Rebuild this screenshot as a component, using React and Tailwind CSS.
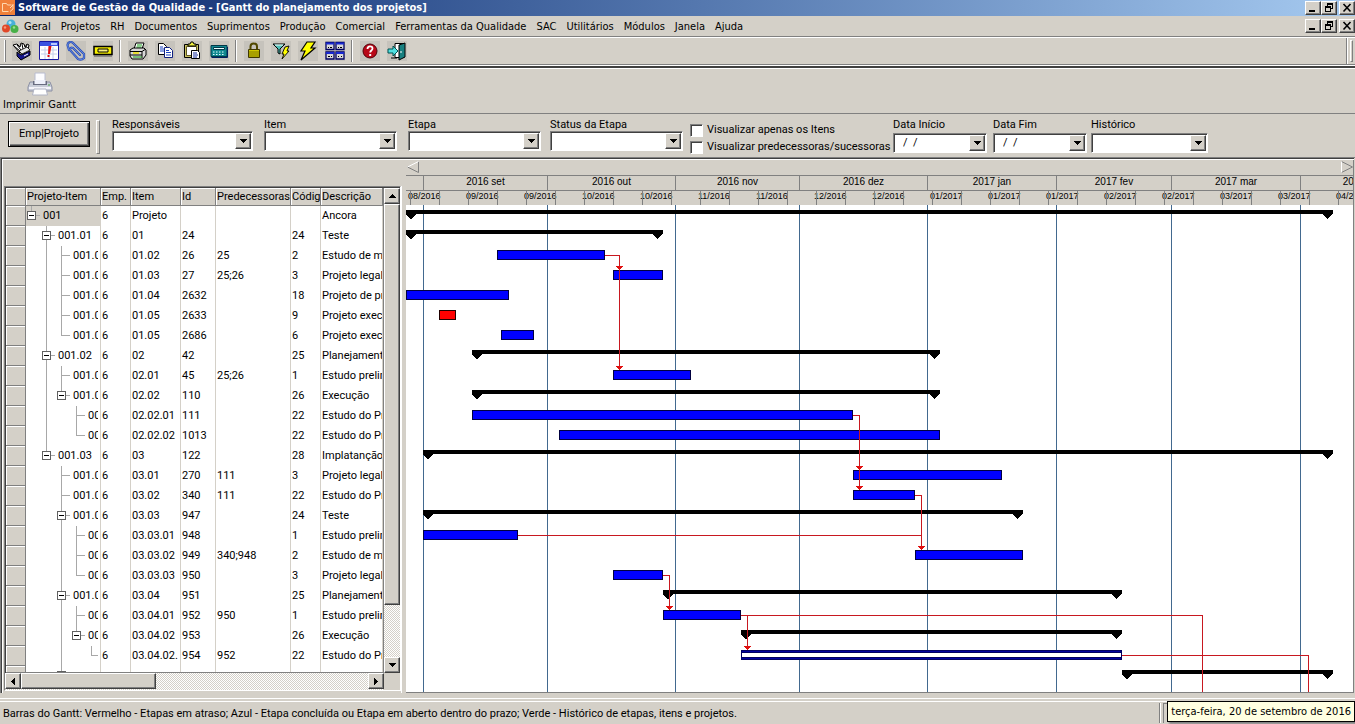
import React from "react";

const RAISED =
  "border border-t-white border-l-white border-r-[#404040] border-b-[#404040] bg-[#d4d0c8] shadow-[inset_-1px_-1px_#808080]";
const SUNKEN =
  "border border-t-[#808080] border-l-[#808080] border-r-white border-b-white bg-white shadow-[inset_1px_1px_#404040]";
const TRACK =
  "bg-[repeating-conic-gradient(#ffffff_0_25%,#d4d0c8_0_50%)] bg-[length:2px_2px]";
const UI = "font-['DejaVu_Sans_Condensed','DejaVu_Sans',sans-serif]";

const menus = [
  "Geral", "Projetos", "RH", "Documentos", "Suprimentos", "Produção", "Comercial",
  "Ferramentas da Qualidade", "SAC", "Utilitários", "Módulos", "Janela", "Ajuda",
];

/* ---------- window buttons ---------- */

function WindowButtons() {
  return (
    <div className="flex">
      <button aria-label="Minimizar" className={`h-[14px] w-4 ${RAISED}`}>
        <svg width="14" height="12" shapeRendering="crispEdges"><path d="M3 8h6v2H3z" /></svg>
      </button>
      <button aria-label="Restaurar" className={`h-[14px] w-4 ${RAISED}`}>
        <svg width="14" height="12" shapeRendering="crispEdges">
          <path d="M5 1h6v2H5zM5 3h1v1H5zM10 3h1v4h-1zM9 6h1v1H9zM3 4h6v2H3zM3 6h1v4H3zM8 6h1v4H8zM3 9h6v1H3z" />
        </svg>
      </button>
      <button aria-label="Fechar" className={`ml-0.5 h-[14px] w-4 ${RAISED}`}>
        <svg width="14" height="12"><path d="M3.500 2l7 7.500M10.500 2l-7 7.500" stroke="#000" strokeWidth="1.600" /></svg>
      </button>
    </div>
  );
}

/* ---------- toolbar icons (20 x 20) ---------- */

const icons = {
  agenda: (
    <>
      <path d="M1 4l4-1 3 3 1-4 3 1 1 3 2-3 2 1-1 4-8 4z" fill="#fff" stroke="#000" />
      <path d="M2 5l6 5M5 4l4 5M10 3l1 5M15 4l-2 4" stroke="#000" />
      <path d="M5 11l4 3 9-4v4l-9 5-4-4z" fill="#16168c" stroke="#000" />
      <path d="M7 10l8-4 3 3-8 4z" fill="#e8e8e8" stroke="#000" strokeWidth=".8" />
      <path d="M12 15l4-2" stroke="#fff" />
    </>
  ),
  calendar: (
    <>
      <path d="M.5.5h19v18H.5z" fill="#fff" stroke="#1818a0" />
      <path d="M1 1h18v4H1z" fill="#3a52e0" />
      <path d="M12 2h6v2h-6z" fill="#b8c8ff" />
      <path d="M2 9h16M2 13h16M6 6v12M10 6v12M14 6v12" stroke="#c4cce8" />
      <path d="M9.500 5h3l-1.500 8H9z" fill="#e01010" />
      <path d="M8.500 14h2v2h-2z" fill="#e01010" />
    </>
  ),
  clip: (
    <g fill="none" strokeLinejoin="round" strokeLinecap="round">
      <path d="M3 9L1.500 4C2 1 5 0 7 2l11 11v4c-2 2-4 2-6 1L4 9c0-2 1-3 3-2l7 7" stroke="#2c50b4" strokeWidth="2.200" />
      <path d="M3 9L1.500 4C2 1 5 0 7 2l11 11v4c-2 2-4 2-6 1L4 9c0-2 1-3 3-2l7 7" stroke="#6c90e8" strokeWidth=".8" />
    </g>
  ),
  tag: (
    <>
      <path d="M1 5.500h18v8H1z" fill="#f8f000" stroke="#000" strokeWidth="1.500" />
      <path d="M5 8h10v3H5z" fill="#f8f080" stroke="#000" />
      <path d="M1 15h18" stroke="#505050" />
    </>
  ),
  print: (
    <>
      <path d="M6 8l2-6h8l-2 6z" fill="#fff" stroke="#000" />
      <path d="M9 4h5M8.500 6h5" stroke="#18a018" />
      <path d="M2 9l3-2h11l2 2v5l-3 4H4l-2-3z" fill="#d8d8d8" stroke="#000" />
      <path d="M2 10.500h12l3-2M2 14h12M14 10.500V17" stroke="#000" fill="none" />
      <path d="M5 12h6" stroke="#f0e000" strokeWidth="1.500" />
      <path d="M5 16h9" stroke="#18a018" />
    </>
  ),
  copy: (
    <>
      <path d="M3.500 2.500h5l3 3v8h-8z" fill="#fff" stroke="#000" />
      <path d="M5 6h3M5 8h4M5 10h4" stroke="#1840c0" />
      <path d="M9.500 6.500h5l3 3v7h-8z" fill="#fff" stroke="#102080" />
      <path d="M11 9.500h3M11 11.500h5M11 14h5" stroke="#1840c0" />
    </>
  ),
  paste: (
    <>
      <path d="M2.500 3.500h14v13h-14z" fill="#c8c060" stroke="#000" />
      <path d="M4.500 5.500h10v9h-10z" fill="#fff" stroke="#605820" />
      <path d="M6 5V3h2l1-2h2l1 2h2v2z" fill="#f0f040" stroke="#000" />
      <path d="M9.500 9.500h6l2 2v6h-8z" fill="#fff" stroke="#000" />
      <path d="M11 12h4M11 14h5M11 16h4" stroke="#1830a0" />
    </>
  ),
  calc: (
    <>
      <path d="M2 4.500h16v11H2z" fill="#108890" stroke="#003848" />
      <path d="M4.500 6.500h11v2h-11z" fill="#e8ffff" stroke="#003848" />
      <path d="M4 11h12M4 13.500h12" stroke="#e0ffff" strokeDasharray="1.500 1.500" />
      <path d="M2.500 16.500h16V6" fill="none" stroke="#002060" />
    </>
  ),
  lock: (
    <>
      <path d="M6.500 9V5.500C6.500 1.500 13 1.500 13 5.500V9" fill="none" stroke="#504800" strokeWidth="2" />
      <path d="M4.500 8.500h11v8h-11z" fill="#d0c800" stroke="#403800" />
      <path d="M5 11h10M5 13h10M5 15h10" stroke="#807800" />
    </>
  ),
  filter: (
    <>
      <path d="M2 3h12l-5 5v5l-2-1V8z" fill="#50c0b8" stroke="#000" />
      <path d="M4 4h8" stroke="#fff" />
      <path d="M14 6l4-1-2 5h2l-7 8 2-5h-2z" fill="#ffff00" stroke="#000" strokeWidth=".9" />
    </>
  ),
  bolt: <path d="M9 1h8l-4 6h4L3 19l4-9H3z" fill="#ffff00" stroke="#000" strokeWidth="1.200" />,
  modules: (
    <>
      <path d="M1 1.500h8v7H1zM11 1.500h8v7h-8zM1 11h8v7H1zM11 11h8v7h-8z" fill="#d8d8d8" stroke="#000060" strokeWidth="1.300" />
      <path d="M1 1.500h8v2H1zM11 1.500h8v2h-8zM1 11h8v2H1zM11 11h8v2h-8z" fill="#1828d0" />
      <path d="M3 6.500h1m1 0h2M13 6.500h1m1 0h2M3 15.500h2m1 0h1M13 15.500h1m2 0h1" stroke="#000" />
    </>
  ),
  help: (
    <>
      <circle cx="10" cy="10" r="7" fill="#b80818" stroke="#500008" />
      <path d="M7.500 8c0-3.500 5-3.500 5-.5 0 2-2.300 2-2.300 4" fill="none" stroke="#fff" strokeWidth="1.800" />
      <path d="M9.200 13h2v2h-2z" fill="#fff" />
    </>
  ),
  exit: (
    <>
      <path d="M8 2.500h9v14H8z" fill="#fff" stroke="#000" />
      <path d="M12 4l6-2v14l-6 3z" fill="#188080" stroke="#000" />
      <path d="M1 8h5V5l5 5-5 5v-3H1z" fill="#50e0e0" stroke="#005050" />
      <path d="M4 17h6" stroke="#000" />
      <path d="M14 10v2" stroke="#fff" />
    </>
  ),
};

const toolGroups = [
  [["agenda", "Agenda"], ["calendar", "Calendário"], ["clip", "Anexos"], ["tag", "Etiqueta"]],
  [["print", "Imprimir"], ["copy", "Copiar"], ["paste", "Colar"], ["calc", "Calculadora"]],
  [["lock", "Bloquear"], ["filter", "Filtrar"], ["bolt", "Executar"], ["modules", "Módulos"]],
  [["help", "Ajuda"], ["exit", "Sair"]],
];

function Toolbar() {
  return (
    <div className="flex h-[26px] items-center bg-[#d4d0c8]">
      <span className="ml-1 h-[22px] w-[2px] border-l border-white bg-[#808080]" />
      <div className="flex flex-1 items-center pl-[2px]">
        {toolGroups.map((group, g) => (
          <div key={g} className="flex items-center">
            {g > 0 && <span className="mx-[3px] h-[22px] w-[2px] border-r border-white bg-[#808080]" />}
            {group.map(([id, label]) => (
              <button key={id} aria-label={label} className="flex h-6 w-[27px] items-center justify-center">
                <svg width="20" height="20" viewBox="0 0 20 20" fill="none" className="bg-[#c6c3bc]">
                  {icons[id]}
                </svg>
              </button>
            ))}
          </div>
        ))}
      </div>
      <span className="h-full w-[2px] border-r border-white bg-[#808080]" />
      <span className="mr-0.5 ml-0.5 h-[22px] w-[3px] border border-t-white border-l-white border-r-[#808080] border-b-[#808080]" />
    </div>
  );
}

/* ---------- filters ---------- */

function Arrow({ dir }) {
  const shapes = {
    down: "M0 0h7v1H0zM1 1h5v1H1zM2 2h3v1H2zM3 3h1v1H3z",
    up: "M3 0h1v1H3zM2 1h3v1H2zM1 2h5v1H1zM0 3h7v1H0z",
    left: "M3 0h1v7H3zM2 1h1v5H2zM1 2h1v3H1zM0 3h1v1H0z",
    right: "M0 0h1v7H0zM1 1h1v5H1zM2 2h1v3H2zM3 3h1v1H3z",
  };
  const sideways = dir === "left" || dir === "right";
  return (
    <svg width="7" height={sideways ? 7 : 4} className="mx-auto" shapeRendering="crispEdges">
      <path d={shapes[dir]} transform={sideways ? "translate(1 0)" : undefined} />
    </svg>
  );
}

function Combo({ id, label, width, labelHeight = "h-[13px]" }) {
  return (
    <div className={`flex flex-col ${width}`}>
      <label htmlFor={id} className={`leading-[13px] ${labelHeight}`}>{label}</label>
      <div className={`relative h-5 p-px ${SUNKEN}`}>
        <select id={id} className="h-full w-full appearance-none bg-transparent pl-1 outline-none" defaultValue="">
          <option value=""></option>
        </select>
        <span className={`pointer-events-none absolute top-px right-px flex h-4 w-4 items-center ${RAISED}`}>
          <Arrow dir="down" />
        </span>
      </div>
    </div>
  );
}

function DateBox({ id, label, width }) {
  return (
    <div className={`flex flex-col ${width}`}>
      <label htmlFor={id} className="h-[15px] leading-[13px]">{label}</label>
      <div className={`flex h-5 p-px ${SUNKEN}`}>
        <input id={id} defaultValue="/  /" className="h-4 min-w-0 flex-1 bg-transparent pl-2 outline-none" />
        <button aria-label={`Escolher ${label}`} className={`flex h-4 w-4 items-center ${RAISED}`}>
          <Arrow dir="down" />
        </button>
      </div>
    </div>
  );
}

function Check({ label }) {
  return (
    <label className="flex h-[17px] items-center gap-1 whitespace-nowrap">
      <input type="checkbox" className={`size-[13px] appearance-none ${SUNKEN}`} />
      {label}
    </label>
  );
}

function Filters() {
  return (
    <div className="flex h-[43px] items-start bg-[#d4d0c8] pl-2">
      <button className="mt-[7px] h-[26px] w-[82px] border border-black bg-[#d4d0c8] shadow-[inset_1px_1px_#fff,inset_-1px_-1px_#404040,inset_-2px_-2px_#808080]">
        Emp|Projeto
      </button>
      <span className="mt-1.5 ml-1.5 h-[34px] w-[4px] border border-t-white border-l-white border-r-[#808080] border-b-[#808080]" />
      <div className="flex pt-1 pl-3">
        <div className="flex gap-[11px]">
          <Combo id="resp" label="Responsáveis" width="w-[141px]" />
          <Combo id="item" label="Item" width="w-[133px]" />
          <Combo id="etapa" label="Etapa" width="w-[133px]" />
        </div>
        <div className="pl-[9px]"><Combo id="status" label="Status da Etapa" width="w-[133px]" /></div>
        <div className="w-[210px] pt-1 pl-[7px]">
          <Check label="Visualizar apenas os Itens" />
          <Check label="Visualizar predecessoras/sucessoras" />
        </div>
        <div className="flex gap-1.5">
          <DateBox id="inicio" label="Data Início" width="w-[94px]" />
          <DateBox id="fim" label="Data Fim" width="w-[94px]" />
        </div>
        <div className="pl-1">
          <Combo id="hist" label="Histórico" width="w-[117px]" labelHeight="h-[15px]" />
        </div>
      </div>
    </div>
  );
}

/* ---------- task grid ---------- */

// level, text, open node, guides (levels whose line passes through), last child, emp, item, id, predecessors, code, description
const rows = [
  [0, "001", 1, [], 1, "6", "Projeto", "", "", "", "Ancora"],
  [1, "001.01", 1, [1], 0, "6", "01", "24", "", "24", "Teste"],
  [2, "001.0", 0, [1, 2], 0, "6", "01.02", "26", "25", "2", "Estudo de m"],
  [2, "001.0", 0, [1, 2], 0, "6", "01.03", "27", "25;26", "3", "Projeto legal"],
  [2, "001.0", 0, [1, 2], 0, "6", "01.04", "2632", "", "18", "Projeto de pr"],
  [2, "001.0", 0, [1, 2], 0, "6", "01.05", "2633", "", "9", "Projeto exec"],
  [2, "001.0", 0, [1], 1, "6", "01.05", "2686", "", "6", "Projeto exec"],
  [1, "001.02", 1, [1], 0, "6", "02", "42", "", "25", "Planejamento"],
  [2, "001.0", 0, [1, 2], 0, "6", "02.01", "45", "25;26", "1", "Estudo prelim"],
  [2, "001.0", 1, [1], 1, "6", "02.02", "110", "", "26", "Execução"],
  [3, "00", 0, [1, 3], 0, "6", "02.02.01", "111", "", "22", "Estudo do Pr"],
  [3, "00", 0, [1], 1, "6", "02.02.02", "1013", "", "22", "Estudo do Pr"],
  [1, "001.03", 1, [], 1, "6", "03", "122", "", "28", "Implatanção"],
  [2, "001.0", 0, [2], 0, "6", "03.01", "270", "111", "3", "Projeto legal"],
  [2, "001.0", 0, [2], 0, "6", "03.02", "340", "111", "22", "Estudo do Pr"],
  [2, "001.0", 1, [2], 0, "6", "03.03", "947", "", "24", "Teste"],
  [3, "00", 0, [2, 3], 0, "6", "03.03.01", "948", "", "1", "Estudo prelim"],
  [3, "00", 0, [2, 3], 0, "6", "03.03.02", "949", "340;948", "2", "Estudo de m"],
  [3, "00", 0, [2], 1, "6", "03.03.03", "950", "", "3", "Projeto legal"],
  [2, "001.0", 1, [2], 0, "6", "03.04", "951", "", "25", "Planejamento"],
  [3, "00", 0, [2, 3], 0, "6", "03.04.01", "952", "950", "1", "Estudo prelim"],
  [3, "00", 1, [2], 1, "6", "03.04.02", "953", "", "26", "Execução"],
  [4, "", 0, [2], 1, "6", "03.04.02.", "954", "952", "22", "Estudo do Pr"],
  [2, "", 1, [], 1, "", "", "", "", "", ""],
];

const columns = ["Projeto-Item", "Emp.", "Item", "Id", "Predecessoras", "Código", "Descrição"];

function TreeCell({ level, text, open, guides, last }) {
  const cx = 5 + level * 15;
  const widths = ["w-[17px]", "w-8", "w-[47px]", "w-[62px]", "w-[74px]"];
  return (
    <div className="flex h-5 items-center overflow-hidden leading-5">
      <svg height="20" className={`shrink-0 ${widths[level]}`} shapeRendering="crispEdges">
        <g stroke="#a8a8a8" fill="none">
          {guides.map((g) => <path key={g} d={`M${5.5 + g * 15} 0V20`} />)}
          {last === 1 && <path d={`M${cx + 0.5} 0V9.500`} />}
          <path d={`M${cx} 9.500h9`} />
        </g>
        {open === 1 && (
          <>
            <rect x={cx - 3.5} y="5.500" width="8" height="8" fill="#fff" stroke="#606060" />
            <path d={`M${cx - 2} 9.500h5`} stroke="#000" />
          </>
        )}
      </svg>
      <span className="overflow-hidden">{text}</span>
    </div>
  );
}

function ScrollButton({ dir, label, size }) {
  return (
    <button aria-label={label} className={`flex shrink-0 items-center ${size} ${RAISED}`}>
      <Arrow dir={dir} />
    </button>
  );
}

function TaskGrid() {
  return (
    <div className="flex min-h-0 w-[398px] shrink-0 flex-col pt-[26px] pb-[2px] pl-px">
      <div className="flex min-h-0 flex-1 flex-col border border-t-[#808080] border-l-[#808080] border-r-white border-b-white bg-white shadow-[inset_1px_1px_#404040]">
        <div className="flex min-h-0 flex-1 pt-px pl-px">
          <div className="min-h-0 min-w-0 flex-1 overflow-hidden border-r border-b border-[#808080]">
            <table className="w-full table-fixed border-separate border-spacing-0">
              <colgroup>
                <col className="w-5" /><col className="w-[75px]" /><col className="w-[30px]" />
                <col className="w-[50px]" /><col className="w-[35px]" /><col className="w-[75px]" />
                <col className="w-[30px]" /><col />
              </colgroup>
              <thead>
                <tr>
                  <th className="border-r border-b border-[#808080] bg-[#d4d0c8] p-0 shadow-[inset_1px_1px_#fff]" />
                  {columns.map((c) => (
                    <th key={c} className="h-[18px] overflow-hidden border-r border-b border-[#808080] bg-[#d4d0c8] p-0 pl-px text-left leading-[17px] font-normal whitespace-nowrap shadow-[inset_1px_1px_#fff]">
                      {c}
                    </th>
                  ))}
                </tr>
              </thead>
              <tbody>
                {rows.map(([level, text, open, guides, last, ...cells], r) => (
                  <tr key={r} className="h-5">
                    <td className="border-r border-b border-[#808080] bg-[#d4d0c8] p-0 shadow-[inset_1px_1px_#fff]" />
                    <td className={`border-r border-[#d4d0c8] p-0 pr-[2px] whitespace-nowrap ${r === 0 ? "bg-[#d4d0c8]" : ""}`}>
                      <TreeCell level={level} text={text} open={open} guides={guides} last={last} />
                    </td>
                    {cells.map((c, i) => (
                      <td key={i} className="overflow-hidden border-r border-[#d4d0c8] p-0 pl-px leading-5 whitespace-nowrap">
                        {c}
                      </td>
                    ))}
                  </tr>
                ))}
              </tbody>
            </table>
          </div>
          <div className={`flex w-4 flex-col ${TRACK}`}>
            <ScrollButton dir="up" label="Rolar para cima" size="h-4 w-4" />
            <div className={`h-[401px] ${RAISED}`} />
            <span className="flex-1" />
            <ScrollButton dir="down" label="Rolar para baixo" size="h-4 w-4" />
          </div>
        </div>
        <div className="flex h-[17px]">
          <div className={`flex flex-1 ${TRACK}`}>
            <ScrollButton dir="left" label="Rolar para a esquerda" size="h-4 w-4" />
            <div className={`h-4 w-[135px] ${RAISED}`} />
            <span className="flex-1" />
            <ScrollButton dir="right" label="Rolar para a direita" size="h-4 w-4" />
          </div>
          <span className="w-4 bg-[#d4d0c8]" />
        </div>
      </div>
    </div>
  );
}

/* ---------- gantt chart ---------- */

const months = [
  ["", "w-[18px]"], ["2016 set", "w-[124px]"], ["2016 out", "w-[128px]"], ["2016 nov", "w-[124px]"],
  ["2016 dez", "w-[128px]"], ["2017 jan", "w-[129px]"], ["2017 fev", "w-[115px]"],
  ["2017 mar", "w-[129px]"], ["2017 abr", "w-[124px]"],
];
const monthLines = [17, 141, 269, 393, 521, 650, 765, 894];
const weeks = [
  "08/2016", "09/2016", "09/2016", "10/2016", "10/2016", "11/2016", "11/2016", "12/2016", "12/2016",
  "01/2017", "01/2017", "01/2017", "02/2017", "02/2017", "03/2017", "03/2017", "04/2017",
];

// row, start, end, kind
const bars = [
  [0, 0, 927, "group"], [1, 0, 257, "group"], [2, 91, 199, "task"], [3, 207, 257, "task"],
  [4, 0, 103, "task"], [5, 33, 50, "late"], [6, 95, 128, "task"], [7, 66, 534, "group"],
  [8, 207, 285, "task"], [9, 66, 534, "group"], [10, 66, 447, "task"], [11, 153, 534, "task"],
  [12, 17, 927, "group"], [13, 447, 596, "task"], [14, 447, 509, "task"], [15, 17, 617, "group"],
  [16, 17, 112, "task"], [17, 509, 617, "task"], [18, 207, 257, "task"], [19, 257, 716, "group"],
  [20, 257, 335, "task"], [21, 335, 716, "group"], [22, 335, 716, "open"], [23, 716, 927, "group"],
];

const links = [
  "M199 50.500H213.500V165", "M447 210.500H453.500V285", "M509 290.500H515.500V345", "M112 330.500H515.500",
  "M257 370.500H263.500V405", "M335 410.500H796.500V1000", "M341.500 410.500V445", "M716 450.500H902.500V1000",
];
const heads = [[213, 65], [213, 165], [453, 265], [453, 285], [515, 345], [263, 405], [341, 445]];

function Bar({ row, start, end, kind }) {
  const y = 5 + row * 20;
  const w = end - start;
  if (kind === "group") {
    return (
      <path
        d={`M${start} ${y}H${end}V${y + 4}H${end - 1}L${end - 6} ${y + 9}L${end - 11} ${y + 4}H${start + 10}V${y + 5}L${start + 5} ${y + 9}L${start} ${y + 5}Z`}
      />
    );
  }
  if (kind === "open") {
    return (
      <>
        <rect x={start} y={y} width={w} height="10" fill="#000060" />
        <rect x={start + 1} y={y + 3} width={w - 2} height="4" fill="#fff" />
        <path d={`M${start + 1} ${y + 1.5}h${w - 2}M${start + 1} ${y + 8.5}h${w - 2}`} stroke="#0000a0" />
      </>
    );
  }
  return (
    <rect x={start + 0.5} y={y + 0.5} width={w - 1} height="9" fill={kind === "late" ? "#ff0000" : "#0000ff"} stroke={kind === "late" ? "#200000" : "#000040"} />
  );
}

function Gantt() {
  return (
    <div className="flex min-w-0 flex-1 flex-col overflow-hidden border-r border-b border-[#808080] font-['Liberation_Sans',Arial,sans-serif]">
      <div className="flex h-[15px] shrink-0 items-center justify-between pl-px">
        <button aria-label="Período anterior">
          <svg width="13" height="13" fill="none"><path d="M11.500 .5v11L.5 6" stroke="#808080" /><path d="M.5 6l11-5.500" stroke="#fff" /></svg>
        </button>
        <button aria-label="Próximo período">
          <svg width="12" height="13" fill="none"><path d="M.5 .5l11 5.500L.5 11.500" stroke="#808080" /><path d="M.5 .5v11" stroke="#fff" /></svg>
        </button>
      </div>
      <div className="flex h-4 shrink-0 overflow-hidden border-y border-[#808080] text-[10px] leading-[12px]">
        {months.map(([m, w]) => (
          <div key={w + m} className={`shrink-0 border-r border-[#808080] text-center ${w}`}>{m}</div>
        ))}
      </div>
      <div className="relative flex h-[14px] shrink-0 overflow-hidden pl-0.5 text-[9px] leading-[11px]">
        {weeks.map((w, i) => <span key={i} className="w-[58px] shrink-0">{w}</span>)}
        <svg className="absolute inset-0 h-full w-full" shapeRendering="crispEdges">
          {Array.from({ length: 33 }, (_, i) => (
            <path key={i} d={`M${4.5 + i * 29} 0V14`} stroke="#808080" />
          ))}
        </svg>
      </div>
      <div className="min-h-0 flex-1 overflow-hidden bg-white">
        <svg width="100%" height="100%" className="block" shapeRendering="crispEdges" role="img" aria-label="Gráfico de Gantt">
          {monthLines.map((x) => <path key={x} d={`M${x + 0.5} 0V1000`} stroke="#42698f" />)}
          {bars.map(([row, start, end, kind]) => <Bar key={row} row={row} start={start} end={end} kind={kind} />)}
          {links.map((d) => <path key={d} d={d} fill="none" stroke="#c81820" />)}
          {heads.map(([x, y]) => <path key={`${x}-${y}`} d={`M${x - 3} ${y - 4}h7v1h-1v1h-1v1h-1v1h-1v-1h-1v-1h-1v-1h-1z`} fill="#e01010" />)}
        </svg>
      </div>
    </div>
  );
}

/* ---------- page ---------- */

export default function App() {
  return (
    <div className="relative flex h-screen flex-col overflow-hidden bg-[#d4d0c8] font-[Roboto,'Liberation_Sans',sans-serif] text-[11px] text-black">
      <header className="flex h-4 shrink-0 items-center bg-linear-to-r from-[#0a246a] to-[#a6caf0]">
        <svg width="15" height="15" viewBox="0 0 15 15" fill="none" className="mb-px">
          <path d="M0 0h15v15H0z" fill="#f0803a" />
          <path d="M2.500 11.500v-8h4l1 1.500h4M2.500 11.500h6M13 4v5l-3 2.500" stroke="#ffd8b0" />
          <path d="M10 8l3-3" stroke="#ffd8b0" />
        </svg>
        <h1 className={`flex-1 pl-[3px] text-[11px] leading-[14px] font-bold whitespace-nowrap text-white ${UI}`}>
          Software de Gestão da Qualidade - [Gantt do planejamento dos projetos]
        </h1>
        <WindowButtons />
      </header>

      <nav className={`flex h-5 shrink-0 items-center ${UI}`}>
        <svg width="17" height="15" viewBox="0 0 17 15" className="ml-[2px]">
          <circle cx="9" cy="5" r="4.500" fill="#48b0d8" />
          <circle cx="4" cy="9.500" r="4" fill="#e04828" />
          <circle cx="12.500" cy="10" r="4" fill="#48b048" />
          <circle cx="8" cy="3.500" r="1.500" fill="#b0e4f4" />
          <circle cx="3" cy="8.500" r="1.200" fill="#f89878" />
          <circle cx="12" cy="8.500" r="1.200" fill="#98e090" />
        </svg>
        <div className="flex flex-1 gap-2.5 pt-0.5 pl-[5px]">
          {menus.map((m) => <button key={m} className="whitespace-nowrap">{m}</button>)}
        </div>
        <WindowButtons />
      </nav>

      <div className="shrink-0 border-t border-b border-[#808080]">
        <div className="border-t border-white"><Toolbar /></div>
      </div>
      <div className="h-1 shrink-0 border-t border-b border-white bg-[#404040]" />

      <div className="flex h-[45px] shrink-0 items-start border-b border-[#808080] pt-[3px] pl-[3px]">
        <button className={`flex flex-col items-center ${UI}`}>
          <svg width="26" height="24" viewBox="0 0 26 24">
            <path d="M8 1h10v10H8z" fill="#fcfcff" stroke="#b8bcd0" />
            <path d="M3 10h20l2 5v4H1v-4z" fill="#c8ccd8" stroke="#8c90a4" />
            <path d="M6 9h14v4H6z" fill="#686c80" />
            <path d="M7.500 8h11v4h-11z" fill="#eef0fa" />
            <path d="M2 15h22v2H2z" fill="#f4f4fa" />
            <path d="M7 17h12l1.500 6h-15z" fill="#fff" stroke="#b0b4c4" />
            <circle cx="22" cy="13" r="1" fill="#70b070" />
          </svg>
          <span className="leading-[18px]">Imprimir Gantt</span>
        </button>
      </div>

      <Filters />

      <main className="flex min-h-0 flex-1 border-t border-l border-[#808080] pr-px">
        <div className="flex min-h-0 min-w-0 flex-1 border-t border-l border-[#404040]">
          <div className="flex min-h-0 min-w-0 flex-1 border-t border-l border-white">
            <TaskGrid />
            <div className="mt-[26px] w-[5px] border-l border-white" />
            <Gantt />
          </div>
        </div>
      </main>

      <div className="h-[9px] shrink-0 border-b border-white pt-[5px]"><div className="h-px bg-white" /></div>
      <footer className="flex h-[22px] shrink-0 items-center pl-[3px]">
        <p className="flex-1 pt-0.5 whitespace-nowrap">
          Barras do Gantt: Vermelho - Etapas em atraso; Azul - Etapa concluída ou Etapa em aberto dentro do prazo; Verde - Histórico de etapas, itens e projetos.
        </p>
        <span className="mr-0.5 h-5 w-[2px] border-r border-white bg-[#808080]" />
        <span className="h-5 w-[192px] border-t border-l border-[#808080]" />
      </footer>

      <div role="tooltip" className={`absolute right-0 bottom-[2px] border border-black bg-[#ffffe1] px-[3px] leading-[19px] whitespace-nowrap shadow-[2px_2px_2px_#808080] ${UI}`}>
        terça-feira, 20 de setembro de 2016
      </div>
    </div>
  );
}
